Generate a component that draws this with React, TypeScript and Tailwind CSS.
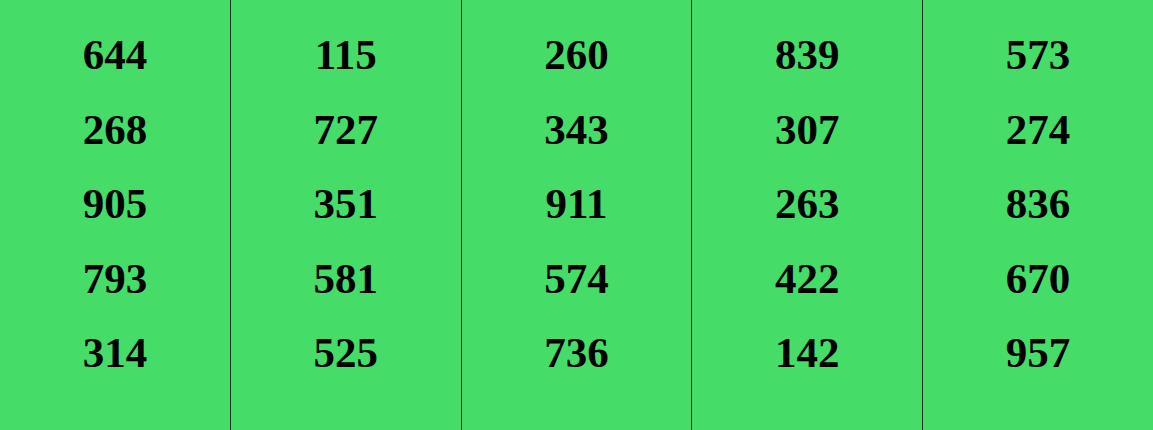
import React from 'react';

// five columns of numbers, read top to bottom
const columns: number[][] = [
  [644, 268, 905, 793, 314],
  [115, 727, 351, 581, 525],
  [260, 343, 911, 574, 736],
  [839, 307, 263, 422, 142],
  [573, 274, 836, 670, 957],
];

const App: React.FC = () => {
  return (
    <div
      className="flex h-[430px] w-full bg-[#45dd68]"
      style={{ fontFamily: '"Liberation Serif", "Times New Roman", serif' }}
    >
      {columns.map((col, i) => (
        <div
          key={i}
          className={`flex flex-1 flex-col items-center pt-[18px] ${
            i < columns.length - 1 ? 'border-r border-[#14331c]' : ''
          }`}
        >
          {col.map((n) => (
            <div key={n} className="text-[43px] font-bold leading-[74.5px] text-black">
              {n}
            </div>
          ))}
        </div>
      ))}
    </div>
  );
};

export default App;
